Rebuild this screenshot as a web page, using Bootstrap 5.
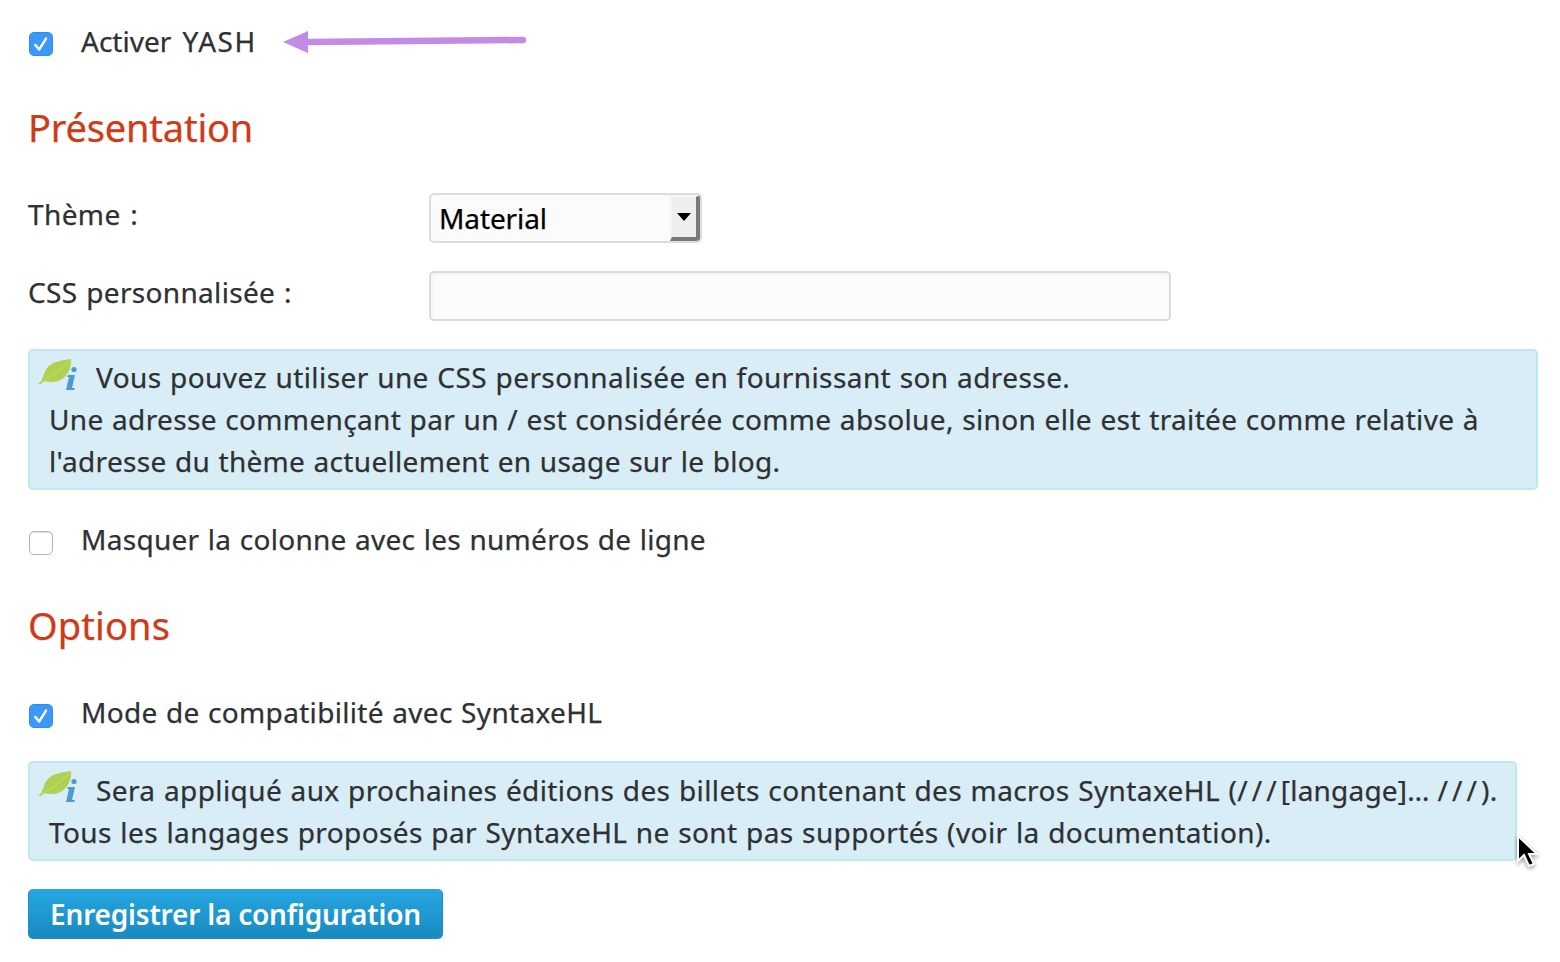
<!DOCTYPE html>
<html lang="fr">
<head>
<meta charset="utf-8">
<meta name="viewport" content="width=device-width, initial-scale=1">
<title>YASH</title>
<link href="https://cdn.jsdelivr.net/npm/bootstrap@5.3.0/dist/css/bootstrap.min.css" rel="stylesheet">
<style>
body{font-family:"Noto Sans","Open Sans",sans-serif;font-size:28px;line-height:42px;color:#2e3133;background:#fff;overflow:hidden;word-spacing:.8px;-webkit-text-stroke:.25px currentColor}
.settings{padding:20px 22px 0 28px}
.line-h{height:42px;white-space:nowrap}
.section-title{font-size:38px;line-height:56px;font-weight:400;color:#cf3a17;margin:37px 0 38px}
.form-check-input.opt{width:24px;height:24px;margin:13px 28px 0 1px;border:1.5px solid #b4b4b4;border-radius:5px;box-shadow:inset 0 1px 1px #ddd;flex:none}
.form-check-input.opt:checked{background-color:#3b99fc;border:1px solid #2f8df0;box-shadow:none;background-size:100% 100%;background-image:url("data:image/svg+xml,%3Csvg xmlns='http://www.w3.org/2000/svg' viewBox='0 0 22 22'%3E%3Cpath d='M5.3 12l3.8 4.6L16 5.6' fill='none' stroke='%23fff' stroke-width='2.4' stroke-linecap='round' stroke-linejoin='round'/%3E%3C/svg%3E")}
.form-check-input.first{margin-top:12px}
.field-label{width:401px;height:50px;white-space:nowrap}
.theme-box{width:273px;height:50px;border:2px solid #dcdcdc;border-radius:5px;background:#fbfbfb;color:#000;padding-left:8px;line-height:47px}
.theme-drop{width:30px;height:46px;background:#eee;border-style:solid;border-width:2px 4px 4px 2px;border-color:#f4f4f4 #777b7b #777b7b #f4f4f4;border-radius:0 3px 4px 0}
.form-control.css-url{width:742px;height:50px;border:2px solid #dcdcdc;border-radius:5px;background:#fbfbfb;box-shadow:inset 1px 2px 3px #f1f1f1}
.note-box{background:#d9edf7;border:2px solid #bce8f1;border-radius:5px;padding:5px 18px 5px 19px;margin:28px 0;white-space:nowrap}
.note-a{width:1510px;height:141px}
.note-b{width:1489px;height:100px;padding-top:6px}
.leaf{left:8px;top:7px}
.lead-in{padding-left:47px}
.btn.save{width:415px;height:50px;border:1px solid #1b8fc9;border-top-color:#25a6e1;border-bottom:2px solid #2389c0;border-radius:5px;background:linear-gradient(#25a6e1,#188bc0);color:#fff;font-size:28px;line-height:47px;font-weight:600;padding:1px 0 0;white-space:nowrap;-webkit-text-stroke:0}
.arrow{margin-left:26px;margin-top:8px}
.pointer{right:-27px;bottom:-13px}
.t1{word-spacing:4px}
.caps{letter-spacing:1.5px}
.t2{letter-spacing:-.2px}
.t3{letter-spacing:.4px;word-spacing:2px}
.t4{letter-spacing:-.1px}
.t5{letter-spacing:.33px;word-spacing:1.2px}
.t6{letter-spacing:.42px}
.t7{letter-spacing:.35px}
.t8{letter-spacing:.31px}
.t9{letter-spacing:.29px}
.t10{letter-spacing:.1px}
.t11{letter-spacing:.32px}
.t12{letter-spacing:.4px}
.slashes{letter-spacing:4.1px}
.dots{letter-spacing:8px}
.tag{letter-spacing:.2px}
.t13{letter-spacing:.4px}
.t14{letter-spacing:-.2px}
</style>
</head>
<body>
<form class="settings">
  <label class="line-h d-flex align-items-start"><input class="form-check-input opt first" type="checkbox" checked><span class="t1">Activer <span class="caps">YASH</span></span>
    <svg class="arrow" width="246" height="26" viewBox="0 0 246 26"><path d="M24 14L240 12" stroke="#c38be6" stroke-width="6.5" stroke-linecap="round"/><path d="M0 14L25 3v22z" fill="#c38be6"/></svg></label>
  <h2 class="section-title"><span class="t2">Présentation</span></h2>
  <div class="d-flex">
    <div class="field-label"><span class="t3">Thème :</span></div>
    <div class="theme-box d-flex justify-content-between"><span class="t4">Material</span><span class="theme-drop d-flex align-items-center justify-content-center"><svg width="14" height="8" viewBox="0 0 14 8"><path d="M0 0h14L7 8z"/></svg></span></div>
  </div>
  <div class="d-flex" style="margin-top:28px">
    <label class="field-label" for="css"><span class="t5">CSS personnalisée :</span></label>
    <input id="css" class="form-control css-url" type="text">
  </div>
  <div class="note-box note-a position-relative">
    <svg class="leaf position-absolute" width="40" height="34" viewBox="0 0 40 34"><path d="M0 26C4 23 4 21 6 16C10 4 20 3 33 1C34 12 27 24 14 24C9 24 6 22 3 26z" fill="#afd052"/><path d="M3 24Q17 18 31 3" fill="none" stroke="#bad961" stroke-width="1.5"/><circle cx="36" cy="11.5" r="2.6" fill="#4d9bd5"/><path d="M30 17h7l-3 13h3l-1 2h-8l3-13h-2z" fill="#4d9bd5"/></svg>
    <div class="lead-in"><span class="t6">Vous pouvez utiliser une CSS personnalisée en fournissant son adresse.</span></div>
    <div><span class="t7">Une adresse commençant par un / est considérée comme absolue, sinon elle est traitée comme relative à</span></div>
    <div><span class="t8">l'adresse du thème actuellement en usage sur le blog.</span></div>
  </div>
  <label class="line-h d-flex align-items-start"><input class="form-check-input opt" type="checkbox"><span class="t9">Masquer la colonne avec les numéros de ligne</span></label>
  <h2 class="section-title"><span class="t10">Options</span></h2>
  <label class="line-h d-flex align-items-start"><input class="form-check-input opt" type="checkbox" checked><span class="t11">Mode de compatibilité avec SyntaxeHL</span></label>
  <div class="note-box note-b position-relative">
    <svg class="leaf position-absolute" width="40" height="34" viewBox="0 0 40 34"><path d="M0 26C4 23 4 21 6 16C10 4 20 3 33 1C34 12 27 24 14 24C9 24 6 22 3 26z" fill="#afd052"/><path d="M3 24Q17 18 31 3" fill="none" stroke="#bad961" stroke-width="1.5"/><circle cx="36" cy="11.5" r="2.6" fill="#4d9bd5"/><path d="M30 17h7l-3 13h3l-1 2h-8l3-13h-2z" fill="#4d9bd5"/></svg>
    <div class="lead-in"><span class="t12">Sera appliqué aux prochaines éditions des billets contenant des macros SyntaxeHL (<span class="slashes">///</span><span class="tag">[langage]</span><span class="dots">…</span><span class="slashes">///</span>).</span></div>
    <div><span class="t13">Tous les langages proposés par SyntaxeHL ne sont pas supportés (voir la documentation).</span></div>
    <svg class="pointer position-absolute" width="28" height="40" viewBox="0 0 28 40"><path d="M4 4v25l6-6 5 11 5-2-5-10h8z" fill="#000" stroke="#fff" stroke-width="2" style="filter:drop-shadow(0 2px 2px #0006)"/></svg>
  </div>
  <button type="button" class="btn save"><span class="t14">Enregistrer la configuration</span></button>
</form>
<script src="https://cdn.jsdelivr.net/npm/bootstrap@5.3.0/dist/js/bootstrap.bundle.min.js"></script>
</body>
</html>
